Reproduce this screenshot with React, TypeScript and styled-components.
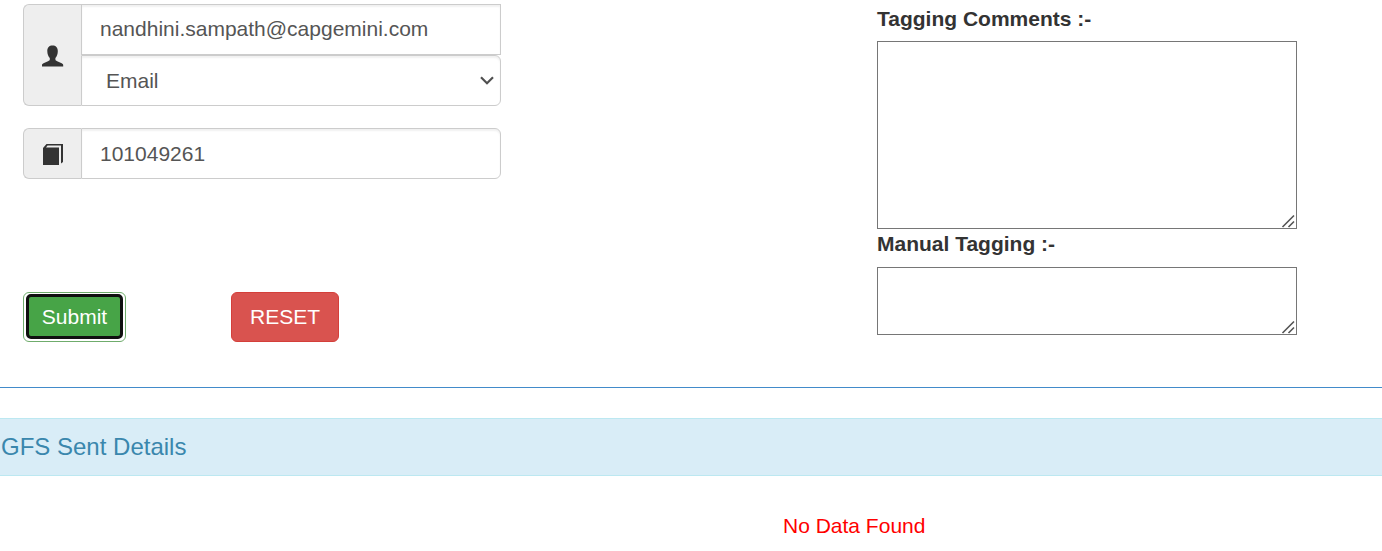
import React from "react";
import styled, { createGlobalStyle } from "styled-components";

const Global = createGlobalStyle`
  *, *::before, *::after { box-sizing: border-box; }
  body {
    margin: 0;
    background: #fff;
    color: #333;
    font: 21px/30px "Liberation Sans", Arial, sans-serif;
    overflow: hidden;
  }
`;

const Page = styled.main`
  height: 551px;
  overflow: hidden;
`;

const Top = styled.section`
  display: flex;
  justify-content: space-between;
  height: 388px;
  padding: 4px 85px 0 23px;
  border-bottom: 1px solid #428bca;
`;

const Form = styled.form`
  width: 478px;
`;

const Group = styled.div`
  display: flex;
  margin-bottom: 22px;
`;

const Addon = styled.span`
  display: flex;
  align-items: center;
  justify-content: center;
  width: 58px;
  padding-top: 1px;
  background: #eee;
  border: 1px solid #ccc;
  border-right: 0;
  border-radius: 6px 0 0 6px;
`;

const Fields = styled.div`
  flex: 1;
`;

const Input = styled.input<{ $rounded?: boolean }>`
  display: block;
  width: 100%;
  height: 51px;
  padding: ${(p) => (p.$rounded ? "0 18px" : "0 18px 2px")};
  border: 1px solid #ccc;
  border-left-color: #ccc;
  border-radius: ${(p) => (p.$rounded ? "0 6px 6px 0" : "0")};
  box-shadow: inset 0 2px 2px rgba(0, 0, 0, 0.06);
  color: #555;
  font: inherit;
  outline: 0;
`;

const Select = styled.div`
  display: flex;
  align-items: center;
  justify-content: space-between;
  height: 51px;
  padding: 0 6px 0 24px;
  border: 1px solid #ccc;
  border-radius: 0 6px 6px 0;
  box-shadow: inset 0 2px 2px rgba(0, 0, 0, 0.06);
  color: #555;
`;

const Buttons = styled.div`
  display: flex;
  gap: 105px;
  margin-top: 113px;
`;

const Button = styled.button<{ $kind: "submit" | "reset" }>`
  width: ${(p) => (p.$kind === "submit" ? "103px" : "108px")};
  height: 50px;
  padding: 0;
  border: 1px solid ${(p) => (p.$kind === "submit" ? "#6fac6c" : "#d43f3a")};
  border-radius: 6px;
  background: ${(p) => (p.$kind === "submit" ? "#fff" : "#d9534f")};
  color: #fff;
  font: inherit;
`;

const FocusFace = styled.span`
  display: flex;
  align-items: center;
  justify-content: center;
  height: 45px;
  margin: 0 2px 1px;
  border: 3px solid #101010;
  border-radius: 5px;
  background: #47a447;
`;

const Notes = styled.div`
  width: 420px;
`;

const Label = styled.label<{ $height: number }>`
  display: block;
  height: ${(p) => p.$height}px;
  font-weight: 700;
`;

const AreaBox = styled.div<{ $height: number }>`
  display: flex;
  align-items: flex-end;
  justify-content: flex-end;
  height: ${(p) => p.$height}px;
  border: 1px solid #767676;
`;

const Banner = styled.h2`
  height: 58px;
  margin: 30px 0 0;
  padding-left: 1px;
  border: solid #bce8f1;
  border-width: 1px 0;
  background: #d9edf7;
  color: #3a87ad;
  font-size: 24px;
  font-weight: 400;
  line-height: 56px;
`;

const Empty = styled.p`
  margin: 35px 0 0;
  padding-left: 783px;
  color: #f00;
`;

const UserIcon = () => (
  <svg width="22" height="22" viewBox="0 0 22 22" fill="#333">
    <path d="M10.500 0.500C7.200 0.500 5.300 2.500 5.300 6C5.300 9 6.300 11.500 7.800 13V14.500C7.800 15.300 7.200 15.700 6 16.200L1.500 18.300C0.600 18.800 0 19.400 0 20.200V21.400H21.200V20.200C21.200 19.400 20.600 18.800 19.700 18.300L15.200 16.200C14 15.700 13.400 15.300 13.400 14.500V13C14.900 11.500 15.800 9 15.800 6C15.800 2.500 13.800 0.500 10.500 0.500Z" />
  </svg>
);

const BookIcon = () => (
  <svg width="20" height="21" viewBox="0 0 20 21">
    <path d="M3.500 0H20V18L18 19.500V1.500H4.500L3 3.500H16V21H0V4Z" fill="#333" />
  </svg>
);

const Chevron = () => (
  <svg width="14" height="9" viewBox="0 0 14 9">
    <path d="M1 1.200L7 7.200L13 1.200" fill="none" stroke="#505050" strokeWidth="2.200" />
  </svg>
);

const Grip = () => (
  <svg width="15" height="14" viewBox="0 0 15 14">
    <path d="M1.500 13L13 1.500M7.500 13L13 7.500" fill="none" stroke="#555" strokeWidth="1.600" />
  </svg>
);

export default function App() {
  return (
    <Page>
      <Global />
      <Top>
        <Form onSubmit={(e) => e.preventDefault()}>
          <Group>
            <Addon><UserIcon /></Addon>
            <Fields>
              <Input defaultValue="nandhini.sampath@capgemini.com" spellCheck={false} />
              <Select>Email<Chevron /></Select>
            </Fields>
          </Group>
          <Group>
            <Addon><BookIcon /></Addon>
            <Fields><Input $rounded defaultValue="101049261" /></Fields>
          </Group>
          <Buttons>
            <Button $kind="submit" type="submit"><FocusFace>Submit</FocusFace></Button>
            <Button $kind="reset" type="button">RESET</Button>
          </Buttons>
        </Form>
        <Notes>
          <Label $height={37}>Tagging Comments :-</Label>
          <AreaBox $height={188}><Grip /></AreaBox>
          <Label $height={38}>Manual Tagging :-</Label>
          <AreaBox $height={68}><Grip /></AreaBox>
        </Notes>
      </Top>
      <Banner>GFS Sent Details</Banner>
      <Empty>No Data Found</Empty>
    </Page>
  );
}
